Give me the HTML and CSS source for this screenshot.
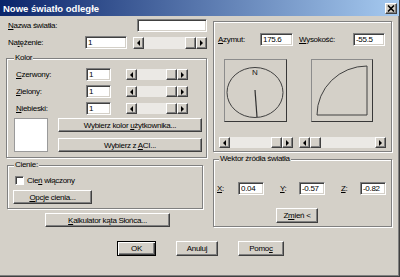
FILE: index.html
```html
<!DOCTYPE html>
<html lang="pl">
<head>
<meta charset="utf-8">
<title>Nowe światło odległe</title>
<link rel="stylesheet" href="styles.css">
</head>
<body>
<div class="window">
  <div class="titlebar">
    <span class="title">Nowe światło odległe</span>
    <span class="close"><svg width="8" height="7" viewBox="0 0 8 7"><path d="M1 0.5 L7 6.5 M7 0.5 L1 6.5" stroke="#000" stroke-width="1.6" fill="none"/></svg></span>
  </div>
  <div class="main">
    <div class="col-left">
      <div class="row row-name">
        <span class="label"><u>N</u>azwa światła:</span>
        <input class="input w-name" type="text" value="" readonly>
      </div>
      <div class="row row-int">
        <span class="label lw-int">Na<u>t</u>ężenie:</span>
        <input class="input w-int" type="text" value="1" readonly>
        <div class="hscroll s-int">
          <span class="sb-btn sb-left"></span>
          <span class="sb-track"><span class="sb-thumb"></span></span>
          <span class="sb-btn sb-right"></span>
        </div>
      </div>
      <div class="group g-kolor">
        <span class="group-title gt-kolor">Kolor</span>
        <div class="crow">
          <span class="clabel"><u>C</u>zerwony:</span>
          <input class="input w-color" type="text" value="1" readonly>
          <div class="hscroll s-color">
            <span class="sb-btn sb-left"></span>
            <span class="sb-track"><span class="sb-thumb"></span></span>
            <span class="sb-btn sb-right"></span>
          </div>
        </div>
        <div class="crow">
          <span class="clabel"><u>Z</u>ielony:</span>
          <input class="input w-color" type="text" value="1" readonly>
          <div class="hscroll s-color">
            <span class="sb-btn sb-left"></span>
            <span class="sb-track"><span class="sb-thumb"></span></span>
            <span class="sb-btn sb-right"></span>
          </div>
        </div>
        <div class="crow">
          <span class="clabel"><u>N</u>iebieski:</span>
          <input class="input w-color" type="text" value="1" readonly>
          <div class="hscroll s-color">
            <span class="sb-btn sb-left"></span>
            <span class="sb-track"><span class="sb-thumb"></span></span>
            <span class="sb-btn sb-right"></span>
          </div>
        </div>
        <div class="swatch-row">
          <span class="swatch"></span>
          <div class="swatch-btns">
            <button class="btn">Wybierz kolor <u>u</u>żytkownika...</button>
            <button class="btn">Wybierz z <u>A</u>CI...</button>
          </div>
        </div>
      </div>
      <div class="group g-cienie">
        <span class="group-title gt-cienie">Cienie:</span>
        <div class="check-row">
          <span class="checkbox"></span>
          <span class="check-label">Cie<u>ń</u> włączony</span>
        </div>
        <button class="btn b-opcje"><u>O</u>pcje cienia...</button>
      </div>
      <button class="btn b-kalk"><u>K</u>alkulator kąta Słońca...</button>
    </div>

    <div class="col-right">
      <div class="frame">
        <div class="row">
          <span class="label lw-az"><u>A</u>zymut:</span>
          <input class="input w-az" type="text" value="175.6" readonly>
          <span class="label lw-wys"><u>W</u>ysokość:</span>
          <input class="input w-wys" type="text" value="-55.5" readonly>
        </div>
        <div class="views">
          <div class="view v-az">
            <svg width="61" height="61" viewBox="0 0 61 61">
              <ellipse cx="30" cy="32.5" rx="28" ry="25" fill="none" stroke="#404040" stroke-width="1"/>
              <text x="30" y="15" text-anchor="middle" class="svg-n">N</text>
              <path d="M30 30 L32 57" stroke="#303030" stroke-width="1.2" fill="none"/>
            </svg>
          </div>
          <div class="view v-wys">
            <svg width="60" height="61" viewBox="0 0 60 61">
              <path d="M5 55 A50 49 0 0 1 55 6 L55 55 Z" fill="none" stroke="#404040" stroke-width="1"/>
            </svg>
          </div>
        </div>
        <div class="scroll-row">
          <div class="hscroll s-az">
            <span class="sb-btn sb-left"></span>
            <span class="sb-track"><span class="sb-thumb"></span></span>
            <span class="sb-btn sb-right"></span>
          </div>
          <div class="hscroll s-wys">
            <span class="sb-btn sb-left"></span>
            <span class="sb-track start"><span class="sb-thumb"></span></span>
            <span class="sb-btn sb-right"></span>
          </div>
        </div>
      </div>
      <div class="group g-wektor">
        <span class="group-title gt-wektor">Wektor źródła światła</span>
        <div class="row">
          <span class="label lw-x"><u>X</u>:</span>
          <input class="input w-vec" type="text" value="0.04" readonly>
          <span class="label lw-yz"><u>Y</u>:</span>
          <input class="input w-vec" type="text" value="-0.57" readonly>
          <span class="label lw-yz"><u>Z</u>:</span>
          <input class="input w-vec" type="text" value="-0.82" readonly>
        </div>
        <button class="btn b-zmien">Z<u>m</u>ień &lt;</button>
      </div>
    </div>
  </div>
  <div class="footer">
    <button class="btn btn-default b-ok">OK</button>
    <button class="btn b-anuluj">Anuluj</button>
    <button class="btn b-pomoc">Pomo<u>c</u></button>
  </div>
</div>
</body>
</html>
```

FILE: styles.css
```css
* { box-sizing: border-box; }
html, body { margin: 0; padding: 0; }
body {
  width: 400px;
  height: 277px;
  overflow: hidden;
  background: #d4d0c8;
  font-family: "Liberation Sans", Arial, sans-serif;
  font-size: 8px;
  letter-spacing: -0.3px;
  color: #000;
}
u { text-decoration: underline; text-underline-offset: 1px; }

.window {
  width: 400px;
  height: 277px;
  background: #d4d0c8;
  border-right: 1px solid #404040;
  border-bottom: 1px solid #404040;
  box-shadow: inset -1px -1px #808080;
  display: flex;
  flex-direction: column;
}

.titlebar {
  height: 16px;
  flex: none;
  display: flex;
  align-items: center;
  justify-content: space-between;
  padding: 0 2px 0 3px;
  background: linear-gradient(to right, #0a246a, #a6caf0);
  color: #fff;
}
.title {
  font-weight: bold;
  font-size: 9.5px;
  letter-spacing: 0;
}
.close {
  width: 12px;
  height: 11px;
  display: flex;
  align-items: center;
  justify-content: center;
  background: #d4d0c8;
  border: 1px solid;
  border-color: #fff #404040 #404040 #fff;
  box-shadow: inset -1px -1px #808080;
}

.main {
  display: flex;
  gap: 6px;
  padding-left: 6px;
}
.col-left { width: 201px; display: flex; flex-direction: column; }
.col-right { width: 179px; display: flex; flex-direction: column; }

.row { display: flex; align-items: center; height: 13px; }
.label { white-space: nowrap; flex: none; }

.input {
  flex: none;
  height: 13px;
  margin: 0;
  padding: 0 0 0 2px;
  font: inherit;
  letter-spacing: inherit;
  color: #000;
  background: #fff;
  border: 1px solid;
  border-color: #808080 #fff #fff #808080;
  box-shadow: inset 1px 1px #404040, inset -1px -1px #d4d0c8;
  outline: none;
}

.btn {
  flex: none;
  margin: 0;
  padding: 0;
  height: 14px;
  font: inherit;
  letter-spacing: inherit;
  color: #000;
  background: #d4d0c8;
  border: 1px solid;
  border-color: #fff #404040 #404040 #fff;
  box-shadow: inset -1px -1px #808080;
  text-align: center;
  white-space: nowrap;
}
.btn-default {
  border: 1px solid #000;
  box-shadow: inset 1px 1px #fff, inset -1px -1px #404040, inset -2px -2px #808080;
}

/* scrollbars */
.hscroll { display: flex; height: 12px; flex: none; }
.sb-btn, .sb-thumb {
  width: 11px;
  height: 100%;
  flex: none;
  background: #d4d0c8;
  border: 1px solid;
  border-color: #fff #404040 #404040 #fff;
  box-shadow: inset -1px -1px #808080;
}
.sb-btn { display: flex; align-items: center; justify-content: center; }
.sb-left::before, .sb-right::before {
  content: "";
  width: 0;
  height: 0;
  border-style: solid;
}
.sb-left::before { border-width: 3px 3px 3px 0; border-color: transparent #000 transparent transparent; }
.sb-right::before { border-width: 3px 0 3px 3px; border-color: transparent transparent transparent #000; }
.sb-track {
  flex: 1;
  display: flex;
  justify-content: flex-end;
  background: #ebe9e5;
}
.sb-track.start { justify-content: flex-start; }

/* groups */
.group {
  position: relative;
  border: 1px solid #808080;
  box-shadow: inset 1px 1px #fff, 1px 1px #fff;
}
.group-title {
  position: absolute;
  top: -6px;
  background: #d4d0c8;
  padding: 0 1px;
  line-height: 10px;
  white-space: nowrap;
}
.frame {
  border: 1px solid #808080;
  box-shadow: inset 1px 1px #fff, 1px 1px #fff;
}

/* left column */
.row-name { margin-top: 3px; }
.row-name .label { padding-left: 2px; }
.w-name { width: 70px; margin-left: auto; }
.row-int { margin-top: 4px; }
.lw-int { width: 79px; padding-left: 2px; }
.w-int { width: 42px; }
.s-int { width: 74px; margin-left: 6px; }

.g-kolor { margin-top: 9px; padding: 9px 0 5px 7px; }
.gt-kolor { left: 7px; }
.crow { display: flex; align-items: center; height: 13px; }
.crow + .crow { margin-top: 4px; }
.clabel { width: 72px; padding-left: 2px; flex: none; }
.w-color { width: 25px; }
.s-color { width: 62px; height: 11px; margin-left: 15px; }
.swatch-row { display: flex; gap: 10px; margin-top: 3px; }
.swatch {
  width: 34px;
  height: 34px;
  background: #fff;
  border: 1px solid #9a9a9a;
  flex: none;
}
.swatch-btns { display: flex; flex-direction: column; gap: 6px; width: 144px; }

.g-cienie { margin: 7px 4px 0 1px; padding: 9px 0 4px 5px; }
.gt-cienie { left: 6px; }
.check-row { display: flex; align-items: center; height: 10px; padding-left: 2px; }
.checkbox {
  width: 9px;
  height: 9px;
  background: #fff;
  border: 1px solid;
  border-color: #808080 #fff #fff #808080;
  box-shadow: inset 1px 1px #404040;
  flex: none;
}
.check-label { margin-left: 3px; }
.b-opcje { width: 79px; margin-top: 5px; display: block; }
.b-kalk { width: 125px; margin: 4px 0 0 39px; }

/* right column */
.frame { margin-top: 5px; padding: 11px 0 3px 4px; }
.lw-az { width: 42px; }
.w-az { width: 33px; }
.lw-wys { width: 54px; margin-left: 6px; }
.w-wys { width: 32px; }
.views { display: flex; gap: 24px; margin: 13px 0 0 6px; }
.view {
  height: 63px;
  border: 1px solid;
  border-color: #8c8c8c #383838 #383838 #8c8c8c;
  flex: none;
}
.view svg { display: block; }
.v-az { width: 63px; }
.v-wys { width: 62px; }
.svg-n { font-family: "Liberation Sans", Arial, sans-serif; font-size: 8px; fill: #202020; letter-spacing: 0; }
.scroll-row { display: flex; gap: 6px; margin: 15px 0 0 1px; }
.s-az { width: 74px; height: 11px; }
.s-wys { width: 87px; height: 11px; }

.g-wektor { margin-top: 7px; padding: 22px 0 3px 3px; }
.gt-wektor { left: 5px; }
.lw-x { width: 21px; }
.lw-yz { width: 19px; margin-left: 16px; }
.w-vec { width: 26px; }
.b-zmien { width: 42px; height: 15px; margin: 13px 0 0 59px; display: block; }

.footer {
  display: flex;
  gap: 20px;
  margin-top: 14px;
  padding-left: 117px;
}
.footer .btn { height: 15px; }
.b-ok { width: 39px; }
.b-anuluj { width: 42px; }
.b-pomoc { width: 46px; }
```
